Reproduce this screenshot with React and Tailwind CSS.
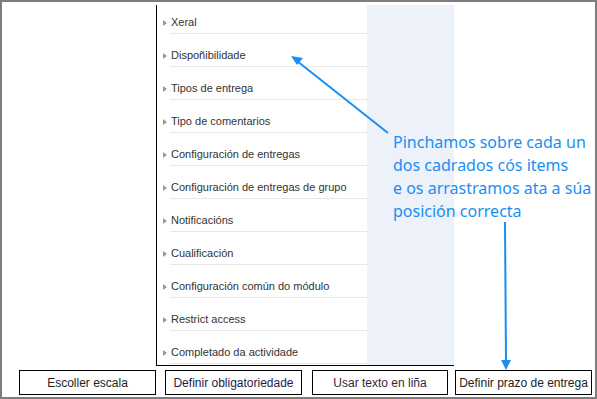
const items = [
  'Xeral',
  'Dispoñibilidade',
  'Tipos de entrega',
  'Tipo de comentarios',
  'Configuración de entregas',
  'Configuración de entregas de grupo',
  'Notificacións',
  'Cualificación',
  'Configuración común do módulo',
  'Restrict access',
  'Completado da actividade',
];

const buttons = [
  { label: 'Escoller escala', cls: 'ml-[17px] w-[137px] text-[#222]' },
  { label: 'Definir obligatoriedade', cls: 'ml-[9px] w-[137px] text-[#1c1c4a]' },
  { label: 'Usar texto en liña', cls: 'ml-[10px] w-[136px] text-[#3a1f3a]' },
  { label: 'Definir prazo de entrega', cls: 'ml-[7px] w-[137px] text-[#222]' },
];

const App = () => {
  return (
    <div
      className="relative w-[597px] h-[399px] border-2 border-[#7d7d7d] bg-white overflow-hidden"
      style={{ fontFamily: '"Liberation Sans", Arial, sans-serif' }}
    >
      <div className="flex flex-col">
        {/* item panel */}
        <div className="ml-[154px] mt-[3px] w-[298px] h-[361px] flex border-l border-b border-black">
          <div className="w-[210px] overflow-hidden">
            <div className="-mt-[4px]">
              {items.map((item) => (
                <div key={item} className="h-[33px] flex pl-[6px]">
                  <div className="pt-[10px] flex items-center">
                    <span className="block w-0 h-0 border-y-[3.5px] border-y-transparent border-l-[4px] border-l-[#9a9a9a]" />
                  </div>
                  <div className="ml-[3px] flex-1 pt-[10px] flex items-center border-b border-[#e8e8e8] pl-[1px] text-[11px] text-[#333]">
                    {item}
                  </div>
                </div>
              ))}
            </div>
          </div>
          <div className="flex-1 bg-[#edf1f9]" />
        </div>

        {/* buttons */}
        <div className="flex mt-[4px]">
          {buttons.map((b) => (
            <div
              key={b.label}
              className={`h-[25px] border border-black flex items-center justify-center text-[12px] ${b.cls}`}
            >
              {b.label}
            </div>
          ))}
        </div>
      </div>

      {/* annotation */}
      <div
        className="absolute left-[391px] top-[129px] text-[16px] leading-[23px] text-[#1a8ff2]"
        style={{ fontFamily: '"Noto Sans", "Open Sans", sans-serif' }}
      >
        <div>Pinchamos sobre cada un</div>
        <div>dos cadrados cós items</div>
        <div>e os arrastramos ata a súa</div>
        <div>posición correcta</div>
      </div>

      <svg className="absolute left-[-2px] top-[-2px] pointer-events-none" width="597" height="399">
        <line x1="388" y1="133" x2="297" y2="61" stroke="#1a8ff2" strokeWidth="2" />
        <polygon points="291,56 303,58 297,65" fill="#1a8ff2" />
        <line x1="505" y1="222" x2="506" y2="361" stroke="#1a8ff2" strokeWidth="2" />
        <polygon points="501,360 511,360 506,370" fill="#1a8ff2" />
      </svg>
    </div>
  );
};

export default App;
